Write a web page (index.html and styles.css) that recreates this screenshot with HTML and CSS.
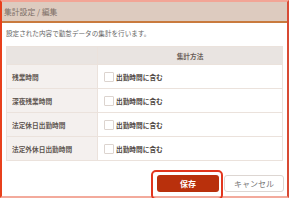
FILE: index.html
```html
<!DOCTYPE html>
<html lang="ja">
<head>
  <meta charset="UTF-8">
  <title>集計設定 / 編集</title>
  <meta name="viewport" content="width=device-width, initial-scale=1.0">
  <link rel="stylesheet" href="styles.css">
</head>
<body>

  <div class="frame">
    <!-- Title -->
    <div class="dialog-title">集計設定 / 編集</div>

    <div class="dialog-body">
      <p class="lead">設定された内容で勤怠データの集計を行います。</p>

      <table class="summary">
        <thead>
          <tr>
            <th class="label-col"></th>
            <th>集計方法</th>
          </tr>
        </thead>
        <tbody>
          <tr>
            <td class="label">残業時間</td>
            <td><label class="check"><span class="box"></span>出勤時間に含む</label></td>
          </tr>
          <tr>
            <td class="label">深夜残業時間</td>
            <td><label class="check"><span class="box"></span>出勤時間に含む</label></td>
          </tr>
          <tr>
            <td class="label">法定休日出勤時間</td>
            <td><label class="check"><span class="box"></span>出勤時間に含む</label></td>
          </tr>
          <tr>
            <td class="label">法定外休日出勤時間</td>
            <td><label class="check"><span class="box"></span>出勤時間に含む</label></td>
          </tr>
        </tbody>
      </table>

      <!-- Buttons -->
      <div class="actions">
        <button class="btn btn-save">保存</button>
        <button class="btn btn-cancel">キャンセル</button>
      </div>
    </div>
  </div>

</body>
</html>
```

FILE: styles.css
```css
body {
  margin: 0;
  background-color: #ffffff;
  font-family: 'Noto Sans CJK JP', 'Noto Sans', sans-serif;
  overflow: hidden;
}

.frame {
  width: 289px;
  height: 198px;
  box-sizing: border-box;
  border-top: 2px solid #f2a596;
  border-left: 2px solid #e8401c;
  border-right: 2px solid #d84a34;
  border-bottom: 2px solid #f3aa9c;
  background-color: #ffffff;
}

.dialog-title {
  height: 19px;
  line-height: 19px;
  padding-left: 2px;
  font-size: 7.8px;
  color: #7c6e66;
  background-color: #ddcbbf;
  border-bottom: 2px solid #c97a3e;
}

.dialog-body {
  padding: 0 2px 0 4px;
}

.lead {
  margin: 4px 0 0;
  line-height: 12px;
  font-size: 6.6px;
  color: #666;
}

.summary {
  width: 277px;
  margin-top: 7px;
  border-collapse: collapse;
  font-size: 6.7px;
}

.summary th,
.summary td {
  border: 1px solid #ebe2dc;
  padding: 0;
}

.summary th {
  height: 17px;
  background-color: #e9e4e1;
  color: #6a5e58;
  font-weight: bold;
}

.summary .label-col {
  width: 90px;
}

.summary td {
  height: 23px;
}

.summary td.label {
  padding-left: 5px;
  background-color: #f4f0ee;
  color: #5e5550;
  font-weight: bold;
}

.check {
  display: flex;
  align-items: center;
  gap: 2px;
  padding-left: 6px;
  color: #4c4440;
  font-weight: bold;
}

.check .box {
  width: 8px;
  height: 8px;
  border: 1px solid #dcd4cf;
  border-radius: 1px;
  background-color: #fff;
}

.actions {
  display: flex;
  justify-content: flex-end;
  gap: 5px;
  margin-top: 14px;
  padding-right: 1px;
}

.btn {
  height: 17px;
  padding: 0;
  font-family: inherit;
  font-size: 8px;
  border-radius: 3px;
  cursor: pointer;
}

.btn-save {
  position: relative;
  width: 62px;
  border: none;
  background-color: #b9300c;
  color: #fff;
  font-weight: bold;
}

.btn-save::after {
  content: '';
  position: absolute;
  top: -5px;
  left: -6px;
  right: -4px;
  bottom: -8px;
  border: 2px solid #e2361e;
  border-radius: 5px;
}

.btn-cancel {
  width: 60px;
  border: 1px solid #ddd6d2;
  background-color: #fff;
  color: #777;
}
```
